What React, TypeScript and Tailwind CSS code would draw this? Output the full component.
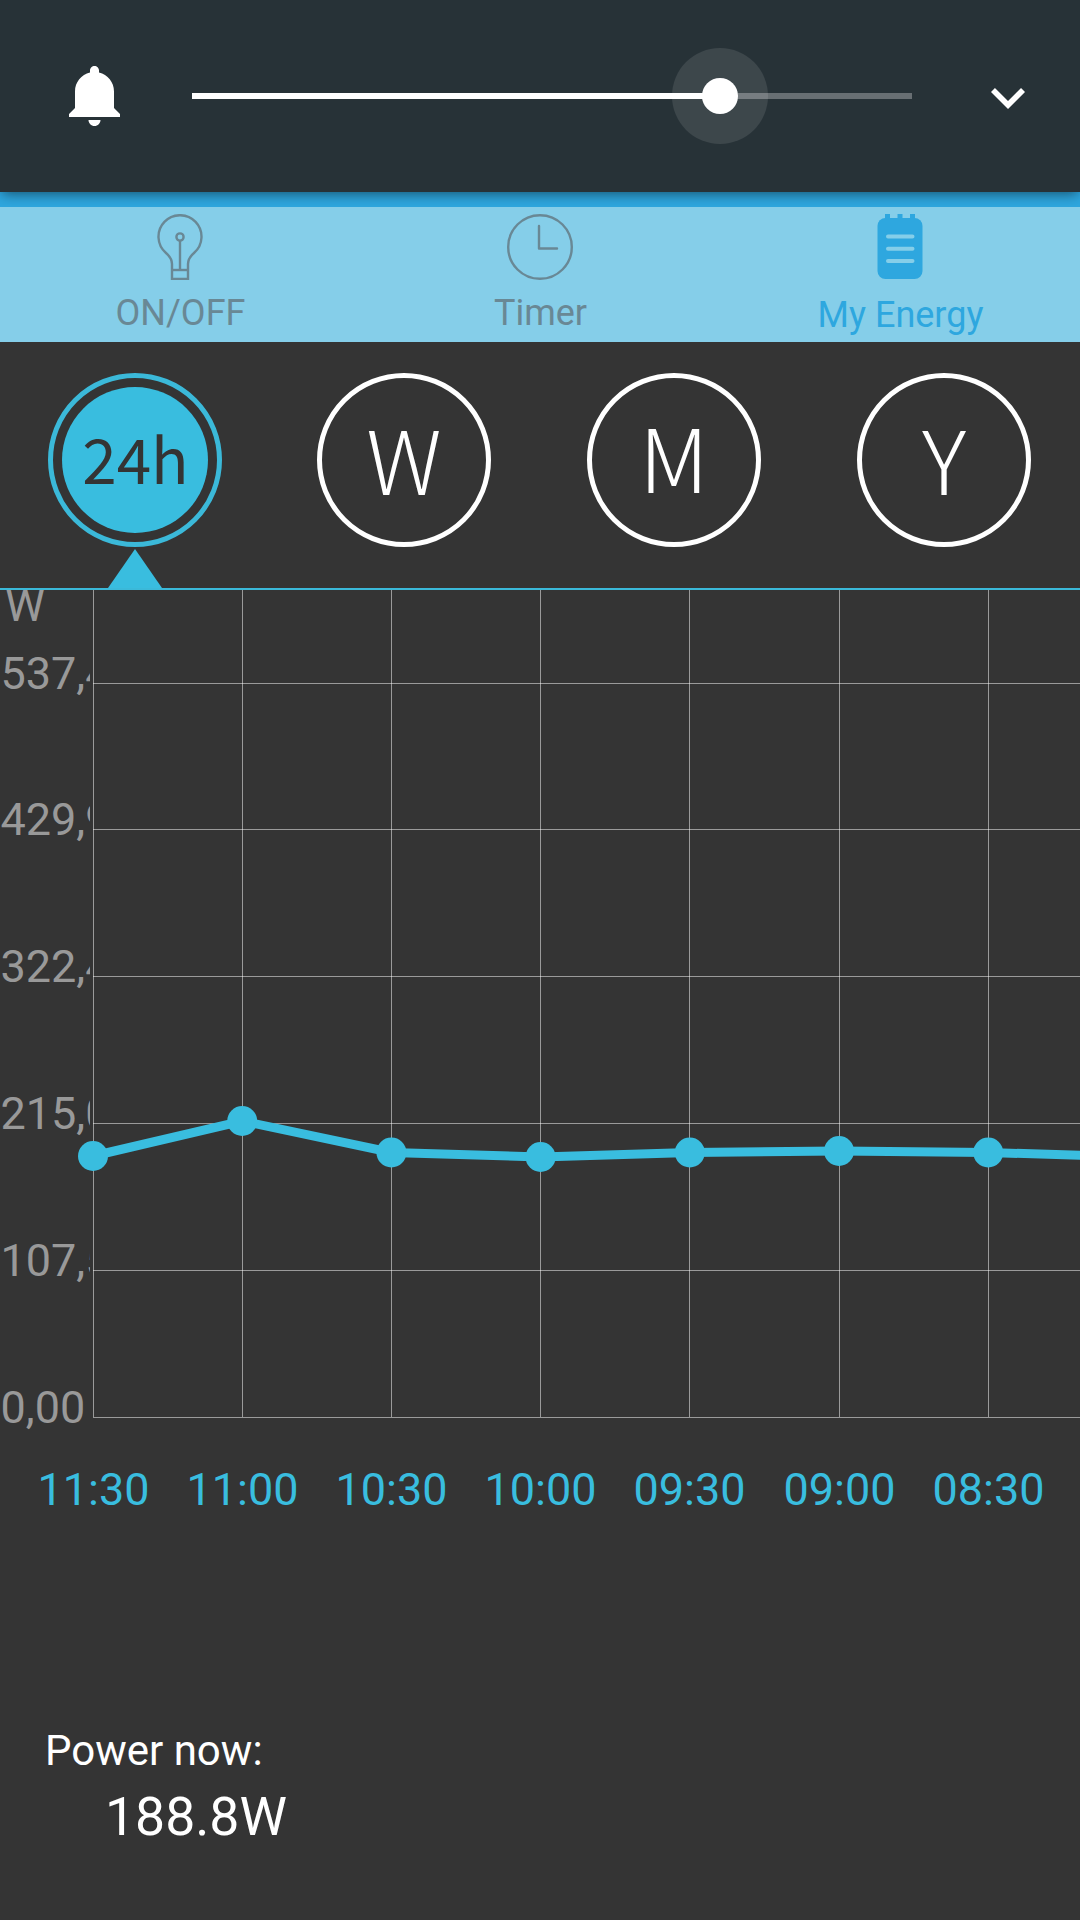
const VolumeBar = () => {
  return (
    <header className="relative z-10 flex items-center h-48 bg-[#273237] pl-[60px] shadow-[0_4px_12px_-2px_rgba(0,0,0,0.5)]">
      <svg className="w-[72px] h-[72px] fill-white" viewBox="0 0 24 24">
        <path d="M11.5 22c1.1 0 2-.9 2-2h-4c0 1.1.9 2 2 2zM18 16v-5.5c0-3.1-2.1-5.6-5-6.3v-.7c0-.8-.7-1.5-1.5-1.5S10 2.7 10 3.5v.7c-2.9.7-5 3.2-5 6.3V16l-2 2v1h17v-1l-2-2z" />
      </svg>
      <div className="relative ml-[60px] w-[720px] h-1.5 bg-white/30">
        <div className="w-[528px] h-full bg-white"></div>
        <div className="absolute left-[480px] -top-[45px] flex items-center justify-center size-24 rounded-full bg-white/10">
          <div className="size-9 rounded-full bg-white"></div>
        </div>
      </div>
      <svg className="ml-[79px] mt-[5px] w-[34px] h-[21px] fill-white" viewBox="6 8.6 12 7.4">
        <path d="M16.6 8.6L12 13.2 7.4 8.6 6 10l6 6 6-6z" />
      </svg>
    </header>
  );
};

const BulbIcon = () => (
  <svg className="w-[46px] h-[66px] fill-none stroke-[#698895] stroke-[2.4]" viewBox="0 0 46 66">
    <path d="M15 65V50C15 45 12.500 42 9 39A21.500 21.500 0 1 1 37 39C33.500 42 31 45 31 50V65Z" />
    <path d="M15 56H31" />
    <path d="M23 27V56" />
    <circle cx="23" cy="23" r="3.600" />
  </svg>
);

const ClockIcon = () => (
  <svg className="w-[66px] h-[66px] fill-none stroke-[#698895] stroke-[2.4]" viewBox="0 0 66 66">
    <circle cx="33" cy="33" r="31.800" />
    <path d="M32 12V34.500H50" strokeLinecap="round" strokeLinejoin="round" />
  </svg>
);

const NoteIcon = () => (
  <svg className="w-[46px] h-[66px]" viewBox="0 0 46 66">
    <path d="M10.500 0V6M23 0V6M35.500 0V6" className="stroke-[#2ea7df] stroke-[5]" />
    <rect x="0.500" y="4" width="45" height="61" rx="8" className="fill-[#2ea7df]" />
    <path
      d="M11 22.500H35.500M11 34.700H35.500M11 47H35.500"
      strokeLinecap="round"
      className="stroke-[#85cee9] stroke-[4]"
    />
  </svg>
);

const Tabs = () => {
  return (
    <nav className="relative z-20 grid grid-cols-3 h-[135px] bg-[#85cee9] text-4xl text-[#698895]">
      <div className="flex flex-col items-center pt-[7px]">
        <BulbIcon />
        <span className="mt-[13px] pl-px">ON/OFF</span>
      </div>
      <div className="flex flex-col items-center pt-[7px]">
        <ClockIcon />
        <span className="mt-[13px] pl-px">Timer</span>
      </div>
      <div className="flex flex-col items-center pt-[7px] text-[#2ea7df]">
        <NoteIcon />
        <span className="mt-[15px] pl-px">My Energy</span>
      </div>
    </nav>
  );
};

const Periods = () => {
  const circle =
    "flex items-center justify-center size-[174px] mr-0.5 rounded-full border-[5px] border-white text-white text-[88px] leading-none font-light";

  return (
    <div className="grid grid-cols-4 h-[246px] pt-[31px] justify-items-center font-['Noto_Sans_CJK_SC',sans-serif]">
      <div className="flex flex-col items-center">
        <div className="flex items-center justify-center size-[174px] rounded-full border-[5px] border-[#3bb9d9]">
          <div className="flex items-center justify-center size-[146px] rounded-full bg-[#39bddf] text-[#343434] text-[62px] leading-none">
            <span className="pb-1.5 pl-px">24h</span>
          </div>
        </div>
        <svg className="mt-0.5 w-[54px] h-[39px] fill-[#39bddf]" viewBox="0 0 54 39">
          <path d="M27 0L54 39H0Z" />
        </svg>
      </div>
      <div className={circle}><span className="pb-[7px]">W</span></div>
      <div className={circle}><span className="pb-[11px]">M</span></div>
      <div className={circle}><span className="pb-[7px]">Y</span></div>
    </div>
  );
};

const hours = ["11:30", "11:00", "10:30", "10:00", "09:30", "09:00", "08:30"];
const columns = [93.5, 242.5, 391.5, 540.5, 689.5, 839.5, 988.5];
const rows = [
  { label: "537,49", y: 93.5 },
  { label: "429,99", y: 239.5 },
  { label: "322,49", y: 386.5 },
  { label: "215,00", y: 533.5 },
  { label: "107,50", y: 680.5 },
  { label: "0,00", y: 827.5 },
];
const power = [566, 531, 562.5, 567, 562.5, 561, 562.5, 567];

const Chart = () => {
  const points = power.map((y, i) => ({ x: 93 + i * 149.2, y }));

  return (
    <svg className="w-[1080px] h-[960px] border-t-2 border-[#3bb9d9] text-[45px]" viewBox="0 0 1080 958">
      <clipPath id="axis">
        <rect width="90" height="958" />
      </clipPath>
      <g clipPath="url(#axis)" className="fill-[#999999]">
        <text x="5" y="31">W</text>
        {rows.map((row) => (
          <text key={row.label} x="0.5" y={row.y + 5}>{row.label}</text>
        ))}
      </g>
      <g className="stroke-white/50">
        {rows.map((row) => (
          <path key={row.label} d={`M93 ${row.y}H1080`} />
        ))}
        {columns.map((x) => (
          <path key={x} d={`M${x} 0V827`} />
        ))}
      </g>
      <g className="fill-[#39bddf]">
        <polyline
          points={points.map((p) => `${p.x},${p.y}`).join(" ")}
          className="fill-none stroke-[#39bddf] stroke-[9]"
        />
        {points.map((p) => (
          <circle key={p.x} cx={p.x} cy={p.y} r="15" />
        ))}
        {hours.map((hour, i) => (
          <text key={hour} x={columns[i]} y="915" textAnchor="middle">{hour}</text>
        ))}
      </g>
    </svg>
  );
};

const App = () => {
  return (
    <div className="flex flex-col w-[1080px] h-[1920px] overflow-hidden bg-[#343434] font-[Roboto,sans-serif]">
      <VolumeBar />
      <div className="h-[15px] bg-[#2ea7df]"></div>
      <Tabs />
      <Periods />
      <Chart />
      {
        // Consumo atual
      }
      <div className="flex flex-col pt-[178px] pl-[45px] text-white">
        <p className="text-[42px] leading-[50px]">Power now:</p>
        <p className="mt-[9px] ml-[60px] text-[53.500px] leading-[64px]">188.8W</p>
      </div>
    </div>
  );
};

export default App;
